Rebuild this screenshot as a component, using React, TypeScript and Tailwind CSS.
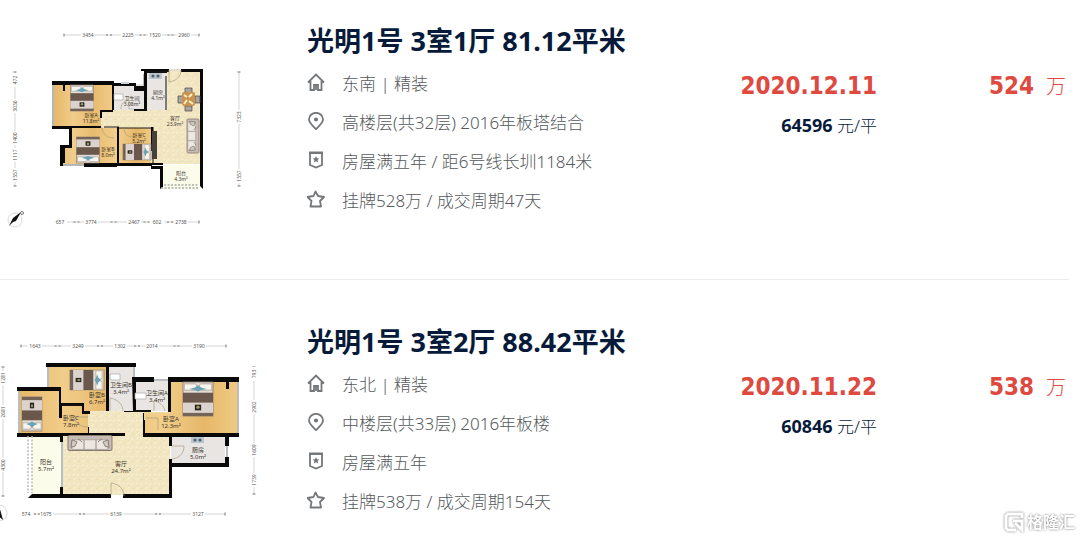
import type { ReactNode } from "react";

type Sale = {
  title: string;
  orientation: string;
  floor: string;
  note: string;
  listing: string;
  date: string;
  unitPrice: string;
  price: string;
  plan: ReactNode;
};

const planFont = '"Noto Sans", "Noto Sans CJK SC", sans-serif';

function Defs({ id }: { id: string }) {
  return (
    <defs>
      <linearGradient id={`${id}-wood`} x1="0" x2="1">
        <stop offset="0" stopColor="#e6b869" />
        <stop offset="0.2" stopColor="#f1cd8a" />
        <stop offset="0.4" stopColor="#e8bb6e" />
        <stop offset="0.65" stopColor="#f2cf8c" />
        <stop offset="0.85" stopColor="#e6b768" />
        <stop offset="1" stopColor="#efca84" />
      </linearGradient>
      <pattern id={`${id}-stone`} width="9" height="9" patternUnits="userSpaceOnUse">
        <rect width="9" height="9" fill="#f2e6c0" />
        <path d="M1 3l3-2M5 8l2-2M1 7l2-1" stroke="#f7eed2" strokeWidth="1.5" />
        <path d="M6 3l2-1M2 9l1-1" stroke="#ecdcb0" />
      </pattern>
    </defs>
  );
}

function Bed({ x, y, w, h, turn = 0 }: { x: number; y: number; w: number; h: number; turn?: number }) {
  return (
    <g transform={`translate(${x} ${y}) rotate(${turn}) scale(${w / 24} ${h / 27})`}>
      <rect x="-12" y="-13.5" width="24" height="27" fill="#e4ddd7" stroke="#8d7b70" strokeWidth="0.7" />
      <path d="M-11-12h9l2 3 2-3h9v5H-11z" fill="#f8f5ef" stroke="#a89a8c" strokeWidth="0.6" />
      <path d="M-7-8l4-1 3-2 3 2 4 1-5 1-2 1-2-1z" fill="#6ba3b5" />
      <rect x="-12" y="-5" width="24" height="8" fill="#6b584d" />
      <rect x="-12" y="3" width="24" height="8" fill="#ddd3ce" />
      <rect x="-12" y="11" width="24" height="2.5" fill="#75645a" />
      <rect x="-2.5" y="4.500" width="5" height="4.500" fill="#27231f" />
      <circle cy="6.5" r="1.3" fill="#9b9d67" />
    </g>
  );
}

function Sofa({ x, y, w, h, turn = 0 }: { x: number; y: number; w: number; h: number; turn?: number }) {
  return (
    <g transform={`translate(${x} ${y}) rotate(${turn}) scale(${w / 44} ${h / 14})`}>
      <rect x="-22" y="-7" width="44" height="14" rx="1.5" fill="#c8bdb4" stroke="#857a70" />
      <path d="M-18-3h12v9h-12zM-6-3H6v9H-6zM6-3h12v9H6z" fill="#ede7e1" stroke="#a49a91" strokeWidth="0.7" />
      <path d="M-18-3l5 2-2 4-4 1zM18-3l-5 2 2 4 4 1zM-12-4l4 3M12-4l-4 3" fill="#d2c9c1" stroke="#6f655e" strokeWidth="0.7" />
    </g>
  );
}

function Room({ x, y, name, area, size = 5 }: { x: number; y: number; name: string; area: string; size?: number }) {
  return (
    <text x={x} y={y} fontSize={size} fill="#3c342b" textAnchor="middle" fontFamily={planFont}>
      {name}
      <tspan x={x} dy={size + 1}>{area}</tspan>
    </text>
  );
}

function Ruler({ y, from, to, marks }: { y: number; from: number; to: number; marks: [number, string][] }) {
  return (
    <g>
      <path d={`M${from} ${y}H${to}`} stroke="#bbb" strokeWidth="0.6" />
      <path d={`M${from} ${y - 1.5}v3M${to} ${y - 1.5}v3`} stroke="#777" />
      {marks.map(([x, label], i) => (
        <g key={x}>
          <rect x={x - 7} y={y - 2} width="14" height="4" fill="#fff" />
          <text x={x} y={y + 1.7} fontSize="5" textAnchor="middle" fill="#555" fontFamily={planFont}>{label}</text>
          {i > 0 && (
            <path
              d={`M${(x + marks[i - 1][0]) / 2 - 2} ${y - 1}l2 2m0-2l-2 2m4-2l2 2m0-2l-2 2`}
              stroke="#888"
              strokeWidth="0.6"
            />
          )}
        </g>
      ))}
    </g>
  );
}

function SideRuler({ x, from, to, marks }: { x: number; from: number; to: number; marks: [number, string][] }) {
  return (
    <g>
      <path d={`M${x} ${from}V${to}`} stroke="#bbb" strokeWidth="0.6" />
      <path d={`M${x - 1.5} ${from}h3M${x - 1.5} ${to}h3`} stroke="#777" />
      {marks.map(([y, label]) => (
        <g key={y} transform={`translate(${x} ${y}) rotate(-90)`}>
          <rect x="-7" y="-2" width="14" height="4" fill="#fff" />
          <text y="1.7" fontSize="5" textAnchor="middle" fill="#555" fontFamily={planFont}>{label}</text>
        </g>
      ))}
    </g>
  );
}

function Stove({ x, y }: { x: number; y: number }) {
  return (
    <g>
      <rect x={x} y={y} width="13" height="6" fill="#b9c6cf" />
      <circle cx={x + 4} cy={y + 3} r="1.6" fill="#55626c" />
      <circle cx={x + 9} cy={y + 3} r="1.6" fill="#55626c" />
    </g>
  );
}

function PlanOne() {
  return (
    <svg viewBox="0 20 280 215" className="w-[280px] shrink-0" role="img" aria-label="户型图">
      <Defs id="a" />
      <Ruler y={35} from={64} to={199} marks={[[88, "3454"], [128, "2225"], [155, "1520"], [184, "2960"]]} />
      <Ruler y={222} from={56} to={199} marks={[[60, "657"], [91, "3774"], [134, "2467"], [157, "602"], [181, "2738"]]} />
      <SideRuler x={15} from={72} to={186} marks={[[80, "472"], [106, "3036"], [138, "1400"], [155, "1117"], [175, "1557"]]} />
      <SideRuler x={239} from={72} to={186} marks={[[117, "7323"], [176, "1557"]]} />
      <path d="M166 71h35v93h-50v-36h-50v-18h65z" fill="url(#a-stone)" />
      <path d="M54 83h59v27h-12v17H54zM71 128h47v36H62v-16h9zM119 128h32v36h-32z" fill="url(#a-wood)" />
      <path d="M114 84h30v26h-30zM145 71h22v39h-22z" fill="#e8e5e3" />
      <path d="M161 165h39v24h-39z" fill="#fbfdea" />
      <path d="M53 84v44M62 148v15M62 165h22M119 165h32M144 74v12" stroke="#b2b7ba" strokeWidth="2" />
      <path
        d="M52 81h62v29h-2V85H65v6h-2v-6H52zM114 83h22v3h8V71h-3v-2h28v3h-22v38h-3V91h-10v-5h-20zM181 69h22v120l-3-3V72h-19zM52 126h49v2H72v20h-7v15h-2v3h-3v-21h9v-16H52zM117 127h2v36h33v3h11v21l-3 2v-20h-9v-3h-34v1H84v-4h33zM100 110h13v2h-11v6h-2zM134 109h13v2h-13zM151 127h2v24h-2zM151 163h12v2h-12z"
        fill="#090909"
      />
      <path d="M166 76v34M153 127v37" stroke="#111" />
      <path d="M147 72h20" stroke="#111" strokeWidth="2" />
      <path d="M119 128h32M119 127h-15" stroke="#1c1917" strokeWidth="1" />
      <path d="M121 83h8M129 109h5" stroke="#d1d5d7" strokeWidth="2" />
      <path d="M169 70h12M169 70v12c7-1 12-5 12-12M102 127c0 7 5 11 12 11M124 128c0 7 5 9 9 9M129 109v-9c-5 1-8 4-8 9" fill="none" stroke="#a99d82" strokeWidth="0.7" />
      <path d="M114 94h9v6h-9z" fill="#fff" stroke="#aaa" strokeWidth="0.7" />
      <Bed x={82} y={98} w={23} h={26} />
      <Bed x={88} y={150} w={23} h={26} turn={180} />
      <Bed x={137} y={152} w={16} h={28} turn={90} />
      <Stove x={149} y={73} />
      <g>
        <path d="M185 88h7v5h-7zM185 106h7v5h-7zM178 96h5v7h-5zM195 96h5v7h-5z" fill="#aaa39e" stroke="#4a4643" strokeWidth="0.7" />
        <rect x="182" y="92" width="13" height="14" rx="2" fill="#c9934f" />
        <path d="M184 95l3 2M192 94l-3 3M184 104l3-4M193 104l-4-3" stroke="#fff0c7" strokeWidth="2" />
      </g>
      <Sofa x={193} y={136} w={34} h={12} turn={90} />
      <path d="M152 131h5v28h-5z" fill="#47413e" />
      <path d="M161 188h38M164 185h34" stroke="#aaa" strokeWidth="1.5" strokeDasharray="2 1.5" />
      <Room x={91} y={117} name="卧室A" area="11.8m²" />
      <Room x={108} y={151} name="卧室B" area="8.0m²" />
      <Room x={139} y={137} name="卧室C" area="5.2m²" />
      <Room x={132} y={100} name="卫生间" area="3.08m²" />
      <Room x={158} y={94} name="厨房" area="4.1m²" />
      <Room x={175} y={120} name="客厅" area="23.9m²" />
      <Room x={181} y={175} name="阳台" area="4.3m²" />
      <g>
        <circle cx="15" cy="220" r="7" fill="#fff" stroke="#ddd" />
        <path d="M9 226l4-8 8-6-5 9-3 1z" fill="#111" />
        <circle cx="22" cy="213" r="1.5" fill="none" stroke="#777" />
      </g>
    </svg>
  );
}

function PlanTwo() {
  return (
    <svg viewBox="0 321 280 215" className="w-[280px] shrink-0" role="img" aria-label="户型图">
      <Defs id="b" />
      <Ruler y={346} from={21} to={226} marks={[[35, "1643"], [78, "3249"], [120, "1302"], [152, "2014"], [199, "3190"]]} />
      <Ruler y={514} from={21} to={225} marks={[[26, "574"], [46, "1675"], [116, "6139"], [198, "3127"]]} />
      <SideRuler x={254} from={367} to={494} marks={[[374, "793"], [407, "2902"], [450, "1609"], [480, "1739"]]} />
      <SideRuler x={3} from={367} to={496} marks={[[378, "1281"], [412, "2681"], [465, "4300"]]} />
      <path d="M88 411h60v22h22v62H62v-59h26z" fill="url(#b-stone)" />
      <path d="M48 366h59v45H88v22H19v-43h29zM170 381h67v53h-92v-21h25z" fill="url(#b-wood)" />
      <path d="M109 367h25v44h-25zM134 381h35v30h-35zM171 436h54v27h-54z" fill="#e8e5e3" />
      <path d="M32 436h29v59H32z" fill="#fbfdea" />
      <path d="M48 367v21M19 391v42M238 381v53M227 446v12M134 367v11M153 380h15M62 442v46" stroke="#b8bdc0" strokeWidth="2" />
      <path
        d="M46 363h90v4h-27v44h-3v-44H46zM17 387h44v16h23v8h6v3h-8v-8H62v12h-3v-27H17zM132 377h22v5h-18v29h-3zM168 377h71v5h-10v7h-3v-7h-55v30h-3zM17 433h108v3H63v6h-3v-5H17zM143 413h2v20h94v4h-10v9h-4v-9h-53v9h-3v-9h-26zM88 427h1v7h-1zM225 457h4v10h-57v31h-49v-4h46v-35h3v4h53zM60 487h3v7h48v4H28l4-4h28zM124 411h10v1h-10z"
        fill="#090909"
      />
      <path d="M145 420v-7h24" fill="none" stroke="#eed497" strokeWidth="2" />
      <path d="M62 405h20M133 411h18" stroke="#111" strokeWidth="2" />
      <path d="M111 495v-12c8 1 13 6 13 13M172 446h12c0 8-5 12-12 13M110 411v-13c7 1 13 6 13 13M154 411v-10c6 1 10 5 11 10M88 417H74c2 7 7 10 14 10M145 418h13v12" fill="none" stroke="#a99d82" strokeWidth="0.7" />
      <path d="M110 374h10v6h-10zM135 393h11v6h-11z" fill="#fff" stroke="#aaa" strokeWidth="0.7" />
      <Bed x={87} y={380} w={20} h={34} turn={90} />
      <Bed x={32} y={414} w={20} h={34} turn={180} />
      <Bed x={198} y={399} w={30} h={34} />
      <Sofa x={90} y={443} w={44} h={15} />
      <Stove x={191} y={437} />
      <path d="M28 436v57M32 436v57" stroke="#bbb" strokeWidth="1.5" strokeDasharray="2 1.5" />
      <Room x={97} y={397} name="卧室B" area="6.7m²" size={6} />
      <Room x={71} y={420} name="卧室C" area="7.8m²" size={6} />
      <Room x={121} y={387} name="卫生间B" area="3.4m²" size={6} />
      <Room x={157} y={395} name="卫生间A" area="3.4m²" size={6} />
      <Room x={171} y={421} name="卧室A" area="12.3m²" size={6} />
      <Room x={46} y={464} name="阳台" area="5.7m²" size={6} />
      <Room x={121} y={466} name="客厅" area="24.7m²" size={6} />
      <Room x={198} y={452} name="厨房" area="5.0m²" size={6} />
      <g>
        <circle cx="-1" cy="513" r="8" fill="#fff" stroke="#ddd" />
        <path d="M-2 502l5 18-5-4z" fill="#111" />
      </g>
    </svg>
  );
}

const icons: Record<string, ReactNode> = {
  home: <path d="M1 9.500L9 1.500l8 8M3.500 8v9H7v-5h4v5h3.500V8M9 12v5" />,
  pin: (
    <>
      <path d="M9 17.200C5.500 13.500 2 10.800 2 7.500a7 6.700 0 0114 0c0 3.300-3.500 6-7 9.700z" />
      <circle cx="9" cy="7.500" r="1.200" fill="currentColor" />
    </>
  ),
  badge: (
    <>
      <path d="M3 1.500h12v12.500l-6 2.500-6-2.500zM2 2h14" />
      <path d="M9 5l1 2.200 2.400.2-1.800 1.600.6 2.500L9 10.200l-2.200 1.300.6-2.500-1.800-1.600 2.400-.2z" fill="currentColor" stroke="none" />
    </>
  ),
  star: <path d="M8.500 1.500L11 6l6 1-4 4 1 5.500H3.500L4.500 11 .5 7l6-1z" strokeLinejoin="round" />,
};

function Detail({ icon, children }: { icon: string; children: ReactNode }) {
  return (
    <li className="flex h-[39px] items-center gap-[17px] whitespace-nowrap">
      <svg viewBox="0 0 18 18" className="-mt-1 size-[18px] shrink-0 text-[#74787b]" fill="none" stroke="currentColor" strokeWidth="1.8" aria-hidden="true">
        {icons[icon]}
      </svg>
      <span>{children}</span>
    </li>
  );
}

const sales: Sale[] = [
  {
    title: "光明1号 3室1厅 81.12平米",
    orientation: "东南 | 精装",
    floor: "高楼层(共32层) 2016年板塔结合",
    note: "房屋满五年 / 距6号线长圳1184米",
    listing: "挂牌528万 / 成交周期47天",
    date: "2020.12.11",
    unitPrice: "64596",
    price: "524",
    plan: <PlanOne />,
  },
  {
    title: "光明1号 3室2厅 88.42平米",
    orientation: "东北 | 精装",
    floor: "中楼层(共33层) 2016年板楼",
    note: "房屋满五年",
    listing: "挂牌538万 / 成交周期154天",
    date: "2020.11.22",
    unitPrice: "60846",
    price: "538",
    plan: <PlanTwo />,
  },
];

function SaleRow({ sale }: { sale: Sale }) {
  return (
    <li className="mr-[11px] flex items-start border-b border-[#ececec] pt-5 pb-11 last:border-b-0 last:pb-0">
      {sale.plan}
      <div className="ml-[27px] min-w-0 flex-1">
        <h2 className="text-[27px] leading-[42px] font-bold whitespace-nowrap text-[#071a3a]">{sale.title}</h2>
        <ul className="pt-[2px] text-[17px] font-light text-[#55595c]">
          <Detail icon="home">{sale.orientation}</Detail>
          <Detail icon="pin">{sale.floor}</Detail>
          <Detail icon="badge">{sale.note}</Detail>
          <Detail icon="star">{sale.listing}</Detail>
        </ul>
      </div>
      <div className="shrink-0 pt-[47px] text-right">
        <p className="font-['DejaVu_Sans_Condensed','Noto_Sans',sans-serif] text-2xl leading-[38px] font-bold text-[#de4a3f]">{sale.date}</p>
        <p className="text-[17px] leading-[40px] text-[#071a3a]">
          <span className="text-lg leading-[40px] font-bold">{sale.unitPrice}</span> <span className="font-light">元/平</span>
        </p>
      </div>
      <p className="mr-[3px] flex w-[189px] shrink-0 items-center justify-end gap-3 pt-[47px] text-[#de4a3f]">
        <span className="font-['DejaVu_Sans_Condensed','Noto_Sans',sans-serif] text-2xl leading-[38px] font-bold">{sale.price}</span>
        <span className="pt-[2px] text-xl leading-[36px] font-light">万</span>
      </p>
    </li>
  );
}

export default function App() {
  return (
    <main className="relative min-h-screen overflow-hidden bg-white font-['Noto_Sans','Noto_Sans_CJK_SC',sans-serif]">
      <ul className="flex flex-col gap-[21px]">
        {sales.map((sale) => (
          <SaleRow key={sale.date} sale={sale} />
        ))}
      </ul>
      <div className="absolute right-[5px] bottom-1 flex items-center gap-[3px] text-white drop-shadow-[0_0_1px_#777]">
        <svg viewBox="0 0 20 20" className="size-5" fill="none" stroke="currentColor" strokeWidth="3" aria-hidden="true">
          <path d="M18 6V2H4L2 4v12l2 2h8M9 9h9v9l-7-7" />
        </svg>
        <span className="text-base font-bold">格隆汇</span>
      </div>
    </main>
  );
}
